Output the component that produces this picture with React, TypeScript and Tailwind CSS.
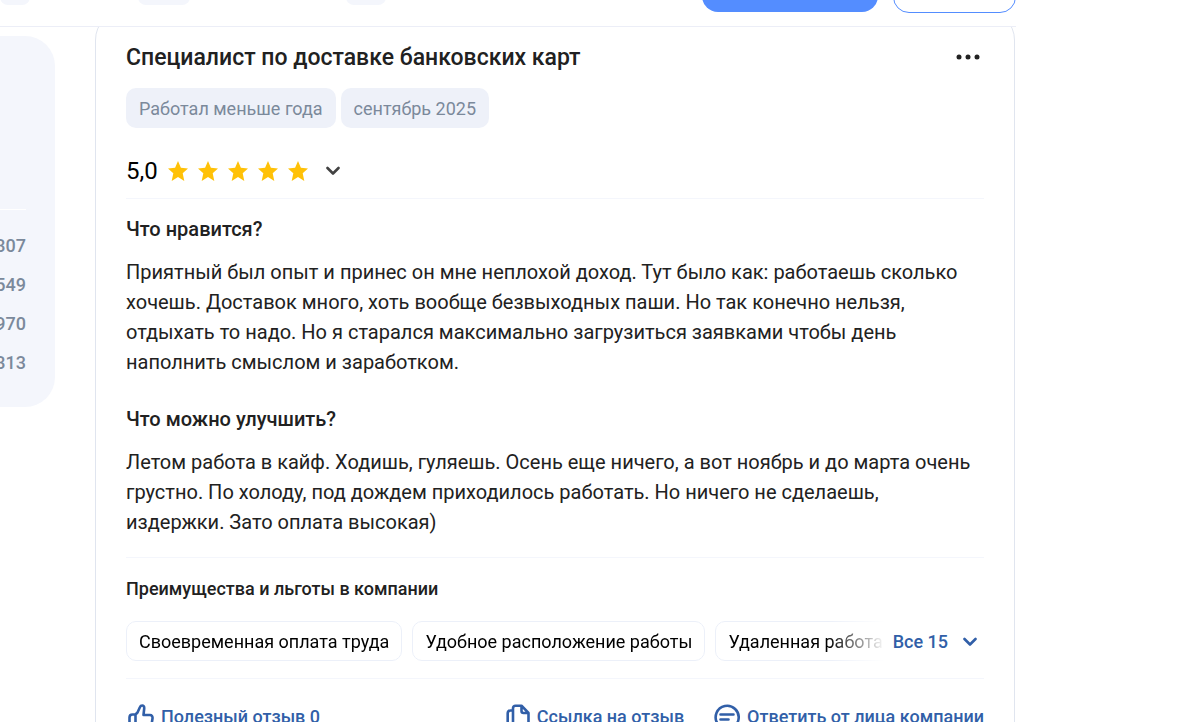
import React from "react";

const tabs = ["w-[30px]", "ml-[108px] w-[52px]", "ml-[156px] w-[40px]"];
const counts = ["307", "549", "970", "313"];
const benefits = ["Своевременная оплата труда", "Удобное расположение работы", "Удаленная работа"];

function Star() {
  return (
    <svg width="20" height="20" viewBox="0 0 20 20" fill="#ffc107" aria-hidden="true">
      <path d="M10 0l2.9 6.7L20 7.4l-5.300 4.900L16.300 20 10 16.100 3.700 20l1.600-7.700L0 7.400l7.100-.7z" />
    </svg>
  );
}

function Chevron() {
  return (
    <svg width="14" height="10" viewBox="0 0 14 10" fill="none" stroke="currentColor" strokeWidth="2.600" strokeLinecap="round" strokeLinejoin="round" aria-hidden="true">
      <path d="M1.500 2L7 7.500 12.500 2" />
    </svg>
  );
}

function ThumbIcon() {
  return (
    <svg width="26" height="26" viewBox="0 0 26 26" fill="none" stroke="currentColor" strokeWidth="2.600" strokeLinecap="round" strokeLinejoin="round" aria-hidden="true">
      <path d="M7.500 24V10.500H4.500C2.800 10.500 1.500 11.800 1.500 13.500V21c0 1.700 1.300 3 3 3h15.500c2 0 3.200-1.200 3.500-3l1-6.500c.3-2.200-.8-3.500-2.500-3.500h-6.500l.7-6.500c.2-1.900-.7-3-2-3-1 0-1.800.5-2.200 1.500L9.500 8.500 7.500 10.500" />
    </svg>
  );
}

function CopyIcon() {
  return (
    <svg width="24" height="26" viewBox="0 0 24 26" fill="none" stroke="currentColor" strokeWidth="2.600" strokeLinecap="round" strokeLinejoin="round" aria-hidden="true">
      <path d="M7 20V4.300c0-1.600 1-2.600 2.500-2.600h6L22.500 9v9c0 1.500-1 2.500-2.500 2.500H7M15.500 2v5c0 1.200.8 2 2 2h5M7 6.500H4.500c-1.600 0-2.800 1-2.800 2.800V22c0 1.500 1 2.500 2.500 2.500H15" />
    </svg>
  );
}

function ReplyIcon() {
  return (
    <svg width="26" height="26" viewBox="0 0 26 26" fill="none" stroke="currentColor" strokeWidth="2.600" strokeLinecap="round" strokeLinejoin="round" aria-hidden="true">
      <path d="M2 24.500l1.500-5A11.500 11.500 0 1 1 7.500 23.300zM6.500 10.500h13M6.500 15.500h8" />
    </svg>
  );
}

export default function App() {
  return (
    <div className="h-screen overflow-hidden bg-white font-['Roboto',sans-serif] text-[#212121]">
      <header className="relative z-10 flex h-[27px] max-w-[1016px] items-start overflow-hidden border-b border-[#eceef7] bg-white">
        {tabs.map((tab) => (
          <span key={tab} className={`-mt-[15px] h-5 shrink-0 rounded-b-lg bg-[#f4f6fc] ${tab}`} />
        ))}
        <button aria-label="Оставить отзыв" className="-mt-7 ml-auto h-10 w-44 shrink-0 rounded-2xl bg-[#548dff]" />
        <button aria-label="Подписаться" className="-mt-7 ml-[15px] h-[41px] w-[123px] shrink-0 rounded-2xl border border-[#548dff]" />
      </header>

      <main className="flex max-w-[1015px] items-start gap-10">
        <aside className="mt-[9px] h-[371px] w-[55px] shrink-0 overflow-hidden rounded-r-[30px] bg-[#f4f6fc] pr-[29px] pt-[173px]">
          <hr className="border-white" />
          <ul className="pt-4 text-lg font-medium leading-[39px] text-[#7b899b]">
            {counts.map((count) => (
              <li key={count} className="flex justify-end">{count}</li>
            ))}
          </ul>
        </aside>

        <article className="-mt-[17px] min-w-0 flex-1 rounded-[30px] border border-[#e0e5ef] px-[30px] pb-[30px] pt-8">
          <div className="flex items-center justify-between">
            <h2 className="text-[23px] font-medium leading-[30px]">Специалист по доставке банковских карт</h2>
            <button aria-label="Ещё" className="pb-0.5 pr-1">
              <svg width="24" height="6" viewBox="0 0 24 6" fill="currentColor" aria-hidden="true">
                <circle cx="3" cy="3" r="2.500" />
                <circle cx="12" cy="3" r="2.500" />
                <circle cx="21" cy="3" r="2.500" />
              </svg>
            </button>
          </div>

          <div className="mt-[15px] flex gap-[5px] text-lg text-[#7b899b]">
            <span className="rounded-[10px] bg-[#eef1f9] px-[13px] pt-0.5 leading-[38px]">Работал меньше года</span>
            <span className="rounded-[10px] bg-[#eef1f9] px-[13px] pt-0.5 leading-[38px]">сентябрь 2025</span>
          </div>

          <div className="mt-7 flex h-[30px] items-center text-black">
            <span className="text-2xl">5,0</span>
            <div className="ml-2.5 flex gap-2.5" role="img" aria-label="5 из 5">
              {[1, 2, 3, 4, 5].map((n) => <Star key={n} />)}
            </div>
            <button aria-label="Подробнее" className="ml-[18px] text-[#424242]"><Chevron /></button>
          </div>
          <hr className="mt-3 border-[#f4f6fc]" />

          <section className="mt-[15px] pr-1 text-xl leading-[30px]">
            <h3 className="font-medium">Что нравится?</h3>
            <p className="mt-[13px]">
              Приятный был опыт и принес он мне неплохой доход. Тут было как: работаешь сколько
              хочешь. Доставок много, хоть вообще безвыходных паши. Но так конечно нельзя,
              отдыхать то надо. Но я старался максимально загрузиться заявками чтобы день
              наполнить смыслом и заработком.
            </p>
          </section>
          <section className="mt-[27px] pr-1 text-xl leading-[30px]">
            <h3 className="font-medium">Что можно улучшить?</h3>
            <p className="mt-[13px]">
              Летом работа в кайф. Ходишь, гуляешь. Осень еще ничего, а вот ноябрь и до марта очень
              грустно. По холоду, под дождем приходилось работать. Но ничего не сделаешь,
              издержки. Зато оплата высокая)
            </p>
          </section>
          <hr className="mt-5 border-[#f4f6fc]" />

          <h3 className="mt-[17px] text-lg font-medium leading-7">Преимущества и льготы в компании</h3>
          <div className="mt-[18px] flex items-center text-lg">
            <ul className="flex min-w-0 flex-1 gap-2.5 overflow-hidden text-black [mask-image:linear-gradient(to_right,black_calc(100%-57px),transparent)]">
              {benefits.map((benefit) => (
                <li key={benefit} className="shrink-0 rounded-[10px] border border-[#ecf0f9] px-3 pt-0.5 leading-9">{benefit}</li>
              ))}
            </ul>
            <button className="ml-2 flex shrink-0 items-center gap-[15px] pr-[7px] pt-0.5 font-medium text-[#315fa8]">
              Все 15 <Chevron />
            </button>
          </div>
          <hr className="mt-[17px] border-[#f4f6fc]" />

          <footer className="mt-[25px] flex items-center text-lg font-medium leading-[26px] text-[#315fa8]">
            <button className="mr-auto flex items-center gap-[7px] pl-0.5"><ThumbIcon />Полезный отзыв 0</button>
            <button className="flex items-center gap-[7px]"><CopyIcon />Ссылка на отзыв</button>
            <button className="ml-[30px] flex items-center gap-[7px]"><ReplyIcon />Ответить от лица компании</button>
          </footer>
        </article>
      </main>
    </div>
  );
}
